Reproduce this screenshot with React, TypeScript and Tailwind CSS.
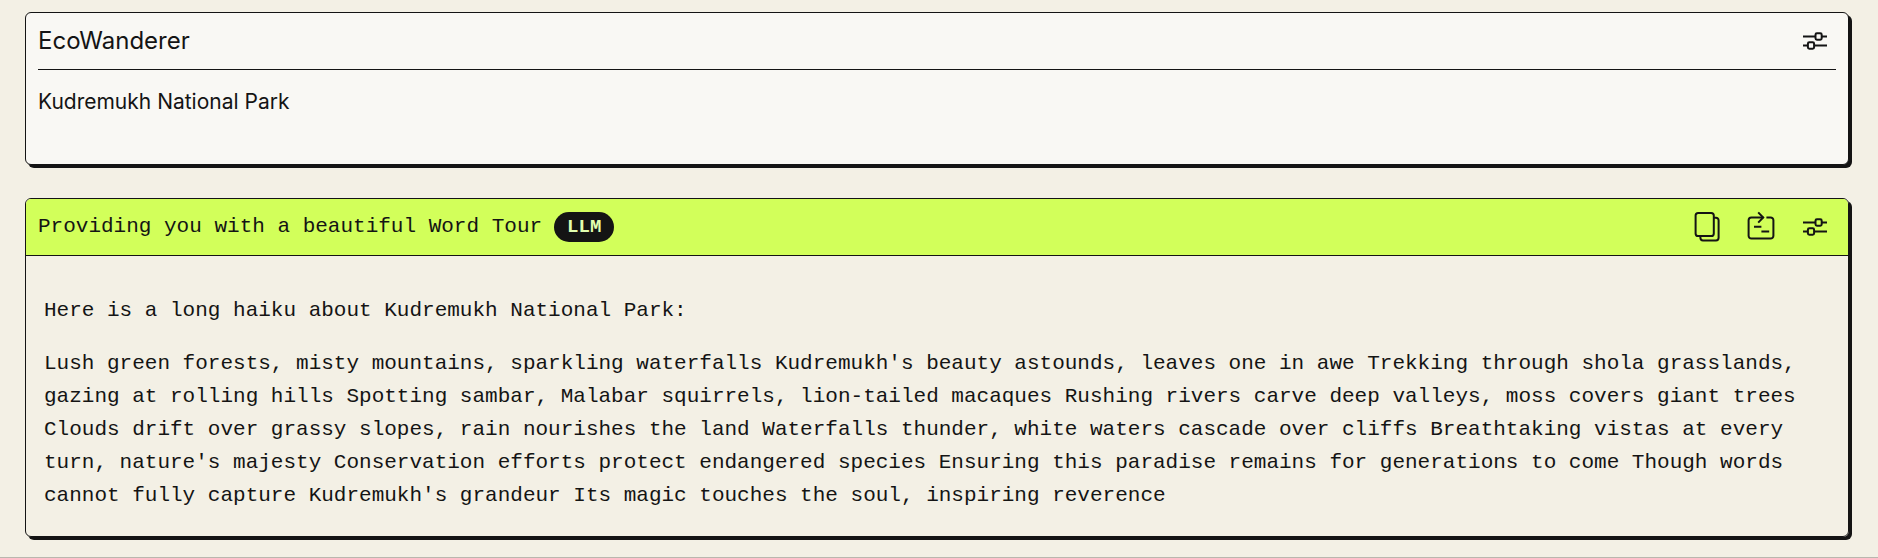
import type { ReactNode } from 'react';

const haiku = [
  'Here is a long haiku about Kudremukh National Park:',
  "Lush green forests, misty mountains, sparkling waterfalls Kudremukh's beauty astounds, leaves one in awe Trekking through shola grasslands, gazing at rolling hills Spotting sambar, Malabar squirrels, lion-tailed macaques Rushing rivers carve deep valleys, moss covers giant trees Clouds drift over grassy slopes, rain nourishes the land Waterfalls thunder, white waters cascade over cliffs Breathtaking vistas at every turn, nature's majesty Conservation efforts protect endangered species Ensuring this paradise remains for generations to come Though words cannot fully capture Kudremukh's grandeur Its magic touches the soul, inspiring reverence",
];

const SlidersIcon = () => (
  <svg
    className="h-8 w-8"
    viewBox="0 0 32 32"
    fill="none"
    stroke="currentColor"
    strokeWidth="2"
  >
    <path d="M4 11.5h12M23 11.5h5M4 20.5h4.5M15.5 20.5H28" />
    <rect x="16.5" y="8.3" width="6.2" height="6.4" rx="1.4" />
    <rect x="8.9" y="17.3" width="6.2" height="6.4" rx="1.4" />
  </svg>
);

const CopyIcon = () => (
  <svg
    className="h-8 w-8"
    viewBox="0 0 32 32"
    fill="none"
    stroke="currentColor"
    strokeWidth="2"
    strokeLinejoin="round"
  >
    <rect x="4.6" y="2" width="18.2" height="23" rx="2.6" />
    <path d="M22.8 6.8h2.2a2.6 2.6 0 0 1 2.6 2.6v17.4a2.6 2.6 0 0 1-2.6 2.6H12a2.6 2.6 0 0 1-2.6-2.6v-1.8" />
  </svg>
);

const InsertIcon = () => (
  <svg
    className="h-8 w-8"
    viewBox="0 0 32 32"
    fill="none"
    stroke="currentColor"
    strokeWidth="2"
  >
    <path d="M18.4 6.5H6.4a2.8 2.8 0 0 0-2.8 2.8v15.4a2.8 2.8 0 0 0 2.8 2.8h19.2a2.8 2.8 0 0 0 2.8-2.8V9.3a2.8 2.8 0 0 0-2.8-2.8h-4.2" />
    <path d="m13.2 1.4 5 5.1-5 5.1M9 15.8h7.4M16.4 20.4h7.8" />
  </svg>
);

const IconButton = ({
  label,
  children,
}: {
  label: string;
  children: ReactNode;
}) => (
  <button type="button" aria-label={label} className="cursor-pointer">
    {children}
  </button>
);

const App = () => {
  return (
    <main className="border-b border-[#b9b7ae] bg-[#f3f0e5] pt-3 pr-[29px] pb-5 pl-[25px] text-[#141414]">
      <section className="rounded-md border border-[#141414] bg-[#f9f8f4] px-3 pb-[46px] shadow-[3px_3px_0_#141414] font-[Inter,sans-serif]">
        <div className="flex h-[57px] items-center justify-between border-b border-[#141414] pr-[5px]">
          <h2 className="text-[24px]">EcoWanderer</h2>
          <IconButton label="EcoWanderer settings">
            <SlidersIcon />
          </IconButton>
        </div>
        <p className="mt-4 text-[21px] leading-8">Kudremukh National Park</p>
      </section>

      <section className="mt-[33px] overflow-hidden rounded-md border border-[#141414] shadow-[3px_3px_0_#141414] font-['Liberation_Mono',monospace]">
        <div className="flex h-[57px] items-center justify-between border-b border-[#141414] bg-[#d2ff5a] pr-[17px] pl-3">
          <div className="flex items-center gap-3">
            <h2 className="text-[21px]">
              Providing you with a beautiful Word Tour
            </h2>
            <span className="flex h-[30px] items-center rounded-full bg-[#141414] px-[13px] text-[19px] font-bold text-[#e2ffb0]">
              LLM
            </span>
          </div>
          <div className="flex items-center gap-[22px]">
            <IconButton label="Copy">
              <CopyIcon />
            </IconButton>
            <IconButton label="Insert">
              <InsertIcon />
            </IconButton>
            <IconButton label="Word Tour settings">
              <SlidersIcon />
            </IconButton>
          </div>
        </div>
        <div className="space-y-5 px-[18px] pt-[38px] pb-6 text-[21px] leading-[33px]">
          {haiku.map((text) => (
            <p key={text}>{text}</p>
          ))}
        </div>
      </section>
    </main>
  );
};

export default App;
